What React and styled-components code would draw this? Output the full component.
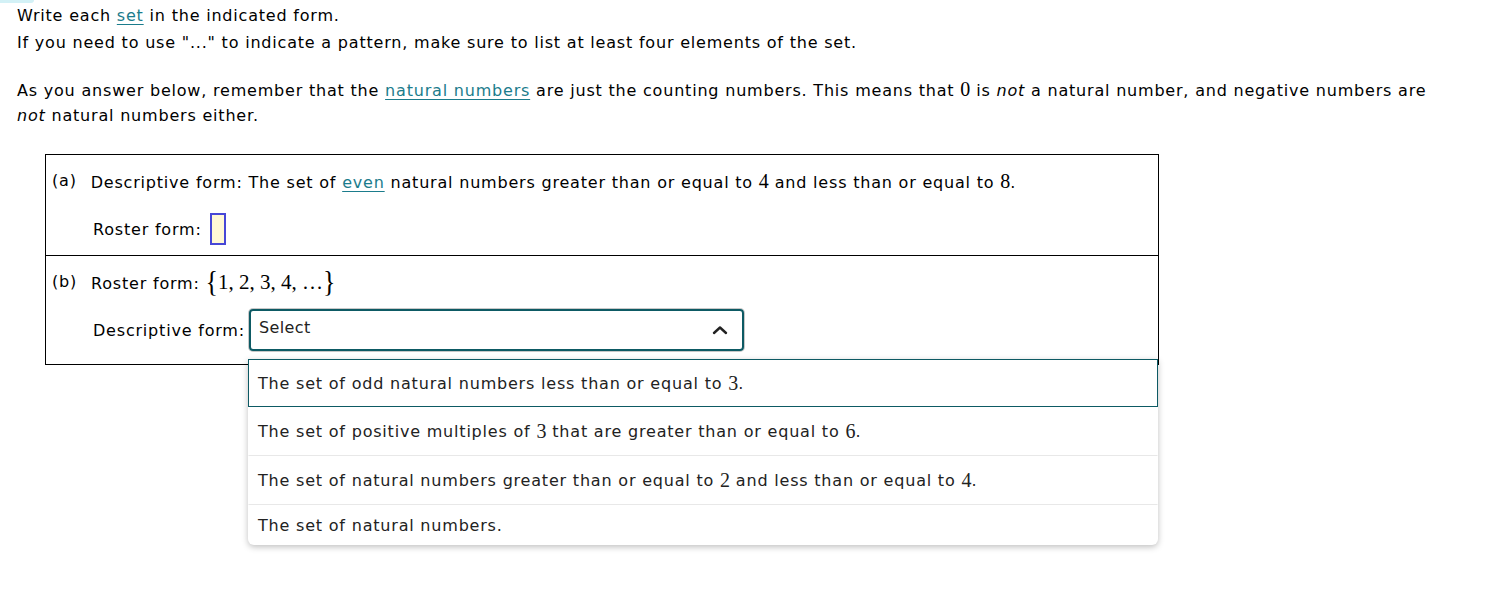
import React from "react";
import styled, { createGlobalStyle } from "styled-components";

const GlobalStyle = createGlobalStyle`
  body {
    margin: 0;
    background: #fff;
    font-family: "DejaVu Sans", Verdana, sans-serif;
    font-size: 16px;
    letter-spacing: 0.8px;
    color: #000;
  }
`;

const Page = styled.div`
  position: relative;
  min-height: 589px;
  box-sizing: border-box;
  padding: 2px 17px 40px 17px;
`;

const CornerTab = styled.div`
  position: absolute;
  left: 0;
  top: 0;
  width: 34px;
  height: 3px;
  background: #d3f1f6;
  border-radius: 0 0 6px 0;
`;

const Line = styled.p`
  margin: 0;
  line-height: 27px;
`;

const Note = styled.p`
  margin: 21px 0 0 0;
  line-height: 25px;
`;

const Link = styled.a`
  color: #1b7c8c;
  text-decoration: underline;
  text-underline-offset: 3px;
`;

const Num = styled.span`
  font-family: "Liberation Serif", "Times New Roman", serif;
  font-size: ${(p) => p.size || 20}px;
  letter-spacing: 0;
`;

const Brace = styled.span`
  display: inline-block;
  font-size: 26px;
  line-height: 1;
  transform: scaleY(1.1);
  vertical-align: -1px;
`;

const Box = styled.div`
  position: relative;
  margin: 26px 0 0 28px;
  width: 1112px;
  border: 1px solid #000;
`;

const Part = styled.div`
  height: ${(p) => p.h}px;
  box-sizing: border-box;
  border-top: ${(p) => (p.first ? "none" : "1px solid #000")};
  padding: 12px 6px 0 6px;
`;

const Question = styled.div`
  display: flex;
  gap: 14px;
  line-height: 28px;
`;

const Answer = styled.div`
  display: flex;
  align-items: center;
  margin: ${(p) => p.mt}px 0 0 41px;
`;

const BlankInput = styled.div`
  width: 12px;
  height: 28px;
  margin-left: 8px;
  background: #fff8d6;
  border: 2px solid #4747d6;
`;

const SelectBox = styled.div`
  display: flex;
  align-items: center;
  justify-content: space-between;
  margin-left: 4px;
  width: 495px;
  height: 42px;
  box-sizing: border-box;
  border: 2px solid #0d5a64;
  border-radius: 4px;
  box-shadow: 0 0 0 1px #c8c8c8;
  padding: 0 14px 0 8px;
  color: #222;
  letter-spacing: 0.4px;
`;

const SelectText = styled.span`
  margin-top: -6px;
`;

const Menu = styled.div`
  position: absolute;
  left: 202px;
  top: 204px;
  width: 910px;
  background: #fff;
  border-radius: 0 0 6px 6px;
  box-shadow: 0 2px 6px rgba(0, 0, 0, 0.25);
  color: #222;
`;

const Option = styled.div`
  height: ${(p) => p.h || 49}px;
  box-sizing: border-box;
  display: flex;
  align-items: center;
  padding: 0 9px;
  border: 1px solid ${(p) => (p.active ? "#0d5a64" : "transparent")};
  border-bottom: 1px solid ${(p) => (p.active ? "#0d5a64" : p.last ? "transparent" : "#e8e8e8")};
  white-space: pre;
`;

const Chevron = () => (
  <svg width="16" height="10" viewBox="0 0 16 10">
    <path d="M2 8 L8 2.5 L14 8" fill="none" stroke="#222" strokeWidth="2.4" strokeLinecap="round" strokeLinejoin="round" />
  </svg>
);

export default function App() {
  return (
    <>
      <GlobalStyle />
      <Page>
        <CornerTab />
        <Line>
          Write each <Link>set</Link> in the indicated form.
        </Line>
        <Line>If you need to use "..." to indicate a pattern, make sure to list at least four elements of the set.</Line>
        <Note>
          As you answer below, remember that the <Link>natural numbers</Link> are just the counting numbers. This means
          that <Num>0</Num> is <i>not</i> a natural number, and negative numbers are
          <br />
          <i>not</i> natural numbers either.
        </Note>
        <Box>
          <Part first h={100}>
            <Question>
              <span>(a)</span>
              <span>
                Descriptive form: The set of <Link>even</Link> natural numbers greater than or equal to <Num>4</Num> and
                less than or equal to <Num>8</Num>.
              </span>
            </Question>
            <Answer mt={16}>
              Roster form:
              <BlankInput />
            </Answer>
          </Part>
          <Part h={109}>
            <Question>
              <span>(b)</span>
              <span>
                Roster form:{" "}
                <Num size={21}>
                  <Brace>{"{"}</Brace>1, 2, 3, 4, …<Brace>{"}"}</Brace>
                </Num>
              </span>
            </Question>
            <Answer mt={11}>
              Descriptive form:
              <SelectBox>
                <SelectText>Select</SelectText>
                <Chevron />
              </SelectBox>
            </Answer>
          </Part>
          <Menu>
            <Option active h={48}>
              The set of odd natural numbers less than or equal to <Num>3</Num>.
            </Option>
            <Option>
              The set of positive multiples of <Num>3</Num> that are greater than or equal to <Num>6</Num>.
            </Option>
            <Option>
              The set of natural numbers greater than or equal to <Num>2</Num> and less than or equal to <Num>4</Num>.
            </Option>
            <Option last h={40}>
              The set of natural numbers.
            </Option>
          </Menu>
        </Box>
      </Page>
    </>
  );
}
